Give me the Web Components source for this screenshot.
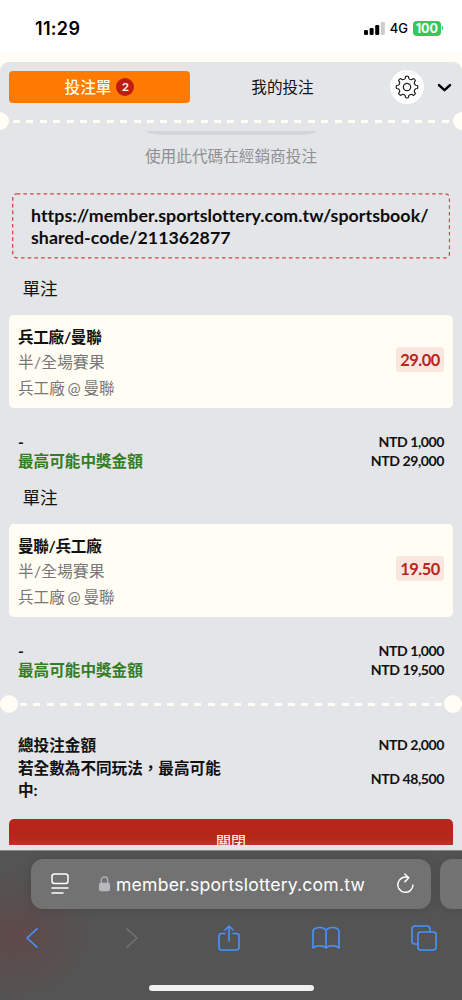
<!DOCTYPE html>
<html lang="zh-Hant">
<head>
<meta charset="utf-8">
<title>投注單</title>
<style>
    body {
        margin: 0;
        width: 462px;
        height: 1000px;
        overflow: hidden;
        background: #fffdf4;
        font-family: Lato, "Noto Sans CJK TC", sans-serif;
        color: #111;
    }
</style>
</head>
<body>
<bet-app></bet-app>

<script>
class StatusBar extends HTMLElement {
    constructor() {
        super();
        this.attachShadow({ mode: 'open' });
    }

    connectedCallback() {
        this.shadowRoot.innerHTML = `
            <style>
                :host {
                    display: flex;
                    align-items: center;
                    box-sizing: border-box;
                    height: 53px;
                    padding: 3px 19px 0 35px;
                    background: #fff;
                    font-family: Inter, sans-serif;
                    color: #000;
                }
                .time { font-size: 18px; font-weight: 600; letter-spacing: 0.3px; margin-right: auto; }
                .net { font-size: 13px; font-weight: 500; margin: 0 5px 0 5px; }
                .battery {
                    width: 27.5px;
                    height: 15px;
                    border-radius: 4px;
                    background: #34c759;
                    color: #fff;
                    font-size: 12.5px;
                    line-height: 15px;
                    font-weight: 700;
                    text-align: center;
                }
                .cap { width: 1.5px; height: 4px; margin-left: 1px; border-radius: 0 2px 2px 0; background: #34c759; }
            </style>
            <span class="time">${this.getAttribute('time')}</span>
            <svg width="21" height="13" viewBox="0 0 21 13">
                <rect x="0" y="8" width="4" height="5" rx="1.2"/>
                <rect x="5.6" y="6" width="4" height="7" rx="1.2"/>
                <rect x="11.2" y="3" width="4" height="10" rx="1.2"/>
                <rect x="16.8" y="0" width="4" height="13" rx="1.2" fill="#ccc"/>
            </svg>
            <span class="net">4G</span>
            <span class="battery">100</span>
            <span class="cap"></span>
        `;
    }
}

class TabBar extends HTMLElement {
    constructor() {
        super();
        this.attachShadow({ mode: 'open' });
    }

    connectedCallback() {
        this.shadowRoot.innerHTML = `
            <style>
                :host {
                    display: flex;
                    align-items: center;
                    height: 50px;
                    padding: 0 9px;
                    font-size: 15.6px;
                }
                .tab { display: flex; align-items: center; justify-content: center; height: 32px; width: 181px; border-radius: 4px; }
                .active { background: #ff7a00; color: #fffdf4; font-weight: 500; }
                .other { width: 185px; }
                ::slotted(span) { padding-bottom: 2px; }
                .count {
                    width: 18px;
                    height: 18px;
                    margin-left: 5px;
                    border-radius: 50%;
                    background: #c01d12;
                    font-size: 12px;
                    line-height: 18px;
                    font-weight: 700;
                    text-align: center;
                }
                .gear { display: flex; width: 34px; height: 34px; border-radius: 50%; background: #fff; margin-left: 15px; }
                .gear svg { margin: auto; }
                .chevron { margin: 2px 0 0 13px; }
            </style>
            <div class="tab active"><slot name="active"></slot><span class="count">${this.getAttribute('count')}</span></div>
            <div class="tab other"><slot name="other"></slot></div>
            <span class="gear">
                <svg width="24" height="24" viewBox="-12 -12 24 24" fill="none" stroke="#222" stroke-width="1.2" stroke-linejoin="round">
                    <path d="${this.gearPath()}"/>
                    <circle r="3.7"/>
                </svg>
            </span>
            <svg class="chevron" width="15" height="10" viewBox="0 0 15 10" fill="none" stroke="#000" stroke-width="2.5" stroke-linecap="round" stroke-linejoin="round">
                <path d="M2 2.2L7.5 7.2L13 2.2"/>
            </svg>
        `;
    }

    // eight blunt teeth with shallow valleys
    gearPath() {
        const at = (r, deg) => {
            const a = deg * Math.PI / 180;
            return (r * Math.sin(a)).toFixed(2) + ' ' + (-r * Math.cos(a)).toFixed(2);
        };
        let d = 'M' + at(10.6, -8);
        for (let i = 0; i < 8; i++) {
            const c = i * 45;
            d += `Q${at(11.2, c)} ${at(10.6, c + 8)}L${at(9, c + 11)}Q${at(7.4, c + 22.5)} ${at(9, c + 34)}L${at(10.6, c + 37)}`;
        }
        return d + 'Z';
    }
}

class TicketDivider extends HTMLElement {
    constructor() {
        super();
        this.attachShadow({ mode: 'open' });
        this.shadowRoot.innerHTML = `
            <style>
                :host { display: flex; align-items: center; height: 18px; color: #fffdf4; }
                :host([edge]) { margin: 0 -9px; }
                i { flex: none; width: 18px; height: 18px; border-radius: 50%; background: currentColor; }
                .line {
                    flex: 1;
                    height: 3px;
                    margin: 1px 2px 0 2px;
                    background: repeating-linear-gradient(90deg, currentColor 0 7px, transparent 7px 13.4px);
                }
                :host([edge]) .line { margin-left: 4px; margin-right: 4px; }
            </style>
            <i></i><span class="line"></span><i></i>
        `;
    }
}

class ShareCode extends HTMLElement {
    constructor() {
        super();
        this.attachShadow({ mode: 'open' });
        this.shadowRoot.innerHTML = `
            <style>
                :host { display: block; }
                .grip { height: 4px; margin: 0 146px; background: #d3d5dc; border-radius: 0 0 18px 18px / 0 0 4px 4px; }
                .hint { margin: 9px 0 25px; height: 24px; line-height: 24px; font-size: 15.65px; color: #8e9092; text-align: center; }
                .box { display: flex; margin: 0 12px; height: 65px; position: relative; }
                svg { position: absolute; left: 0; top: 0; }
                .url {
                    margin: 11px 0 0 19px;
                    font-size: 17.8px;
                    line-height: 22.3px;
                    letter-spacing: 0.04px;
                    font-weight: 700;
                    font-variant-ligatures: none;
                    white-space: pre;
                    color: #0c0c0c;
                }
            </style>
            <div class="grip"></div>
            <div class="hint"><slot name="hint"></slot></div>
            <div class="box">
                <svg width="438" height="66" fill="none" stroke="#d6414b" stroke-width="1.3" stroke-dasharray="3.6 3.1">
                    <rect x="0.7" y="0.9" width="436.8" height="63.9" rx="4"/>
                </svg>
                <div class="url"><slot></slot></div>
            </div>
        `;
    }
}

class BetItem extends HTMLElement {
    constructor() {
        super();
        this.attachShadow({ mode: 'open' });
    }

    connectedCallback() {
        const get = (name) => this.getAttribute(name);
        this.shadowRoot.innerHTML = `
            <style>
                :host { display: block; height: 209.3px; }
                h3 { margin: 0 0 14px 22.5px; height: 26px; line-height: 28px; font-size: 17.6px; font-weight: 400; }
                .card {
                    display: flex;
                    align-items: center;
                    justify-content: space-between;
                    box-sizing: border-box;
                    height: 93px;
                    margin: 0 9px 24px;
                    padding: 2px 9px 0;
                    border-radius: 5px;
                    background: #fffdf4;
                    font-size: 15.6px;
                    line-height: 26px;
                    color: #777;
                }
                .name { font-weight: 700; line-height: 24px; letter-spacing: -0.3px; color: #111; }
                .market { letter-spacing: 0.3px; }
                .pick { word-spacing: -1.2px; }
                .odds {
                    box-sizing: border-box;
                    width: 48px;
                    height: 25px;
                    margin-top: -6px;
                    border-radius: 4px;
                    background: #f8e6df;
                    color: #b8281c;
                    font-size: 16.4px;
                    letter-spacing: -0.5px;
                    font-weight: 700;
                    line-height: 25px;
                    text-align: center;
                }
            </style>
            <h3>單注</h3>
            <div class="card">
                <div>
                    <div class="name">${get('name')}</div>
                    <div class="market">${get('market')}</div>
                    <div class="pick">${get('pick')}</div>
                </div>
                <div class="odds">${get('odds')}</div>
            </div>
            <amount-row amount="${get('stake')}">-</amount-row>
            <amount-row amount="${get('win')}" win>最高可能中獎金額</amount-row>
        `;
    }
}

class AmountRow extends HTMLElement {
    constructor() {
        super();
        this.attachShadow({ mode: 'open' });
    }

    connectedCallback() {
        this.shadowRoot.innerHTML = `
            <style>
                :host {
                    display: flex;
                    justify-content: space-between;
                    align-items: center;
                    height: 18.5px;
                    padding: 0 18px;
                    font-weight: 700;
                    color: #111;
                }
                :host([total]) { height: 23px; }
                :host([tall]) { height: 45px; }
                .label { max-width: 210px; padding-top: 2px; font-size: 15.6px; line-height: 22.5px; }
                :host([total]) .label { padding-top: 1px; }
                :host([win]) .label { color: #337d22; }
                .amount { padding-top: 0.6px; font-size: 14.1px; letter-spacing: -0.45px; }
            </style>
            <span class="label"><slot></slot></span>
            <span class="amount">NTD ${this.getAttribute('amount')}</span>
        `;
    }
}

class BrowserBar extends HTMLElement {
    constructor() {
        super();
        this.attachShadow({ mode: 'open' });
    }

    connectedCallback() {
        this.shadowRoot.innerHTML = `
            <style>
                :host {
                    display: block;
                    box-sizing: border-box;
                    height: 150px;
                    overflow: hidden;
                    border-top: 1px solid #858585;
                    background: radial-gradient(ellipse 80px 66px at 14px 85px, #5f4949 0, #5f494999 45%, #54545400 100%), #545454;
                    font-family: Inter, sans-serif;
                }
                .address {
                    display: grid;
                    grid-template-columns: 400px 40px;
                    gap: 9px;
                    margin: 8px 0 0 31px;
                }
                .field {
                    display: flex;
                    align-items: center;
                    box-sizing: border-box;
                    height: 50px;
                    border-radius: 12px;
                    background: #727272;
                    box-shadow: 0 0 12px #0002;
                    color: #fff;
                    font-size: 17.6px;
                    letter-spacing: 0.2px;
                }
                .page { margin: 0 0 1px 20px; }
                .lock { margin-left: 30px; }
                .host { margin-left: 6px; }
                .reload { margin-left: auto; margin-right: 16px; margin-bottom: 2px; }
                .tools {
                    display: grid;
                    grid-template-columns: 64px 136px 57px 138px 57px;
                    height: 58px;
                    align-items: center;
                    justify-items: center;
                    color: #4793ff;
                    fill: none;
                    stroke: currentColor;
                    stroke-width: 1.6;
                    stroke-linecap: round;
                    stroke-linejoin: round;
                }
                .dim { color: #717171; }
                .home { width: 165px; height: 6px; margin: 18px auto 0; border-radius: 3px; background: #f0f0f0; }
            </style>
            <div class="address">
                <div class="field">
                    <svg class="page" width="18" height="21" viewBox="0 0 18 21" fill="none" stroke="#fff" stroke-width="1.5" stroke-linecap="round">
                        <rect x="1" y="1" width="16" height="9.5" rx="2.5"/>
                        <path d="M1 15H17M1 20H12"/>
                    </svg>
                    <svg class="lock" width="11" height="16" viewBox="0 0 11 16">
                        <rect x="0" y="6.8" width="11" height="8.4" rx="1.8" fill="#b9b7bd"/>
                        <path d="M2.3 7.5V4.4a3.2 3.5 0 0 1 6.4 0V7.5" fill="none" stroke="#b9b7bd" stroke-width="1.3"/>
                    </svg>
                    <span class="host">${this.getAttribute('host')}</span>
                    <svg class="reload" width="19" height="21" viewBox="0 0 19 21" fill="none" stroke="#fff" stroke-width="1.5" stroke-linecap="round" stroke-linejoin="round">
                        <path d="M17 12A7.6 7.6 0 1 1 12 4.6M8.8 1L12.8 4.8L9 8.6"/>
                    </svg>
                </div>
                <div class="field"></div>
            </div>
            <div class="tools">
                <svg width="12" height="20" viewBox="0 0 12 20"><path d="M11 0.8L1 10L11 19.2"/></svg>
                <svg class="dim" width="12" height="20" viewBox="0 0 12 20"><path d="M1 0.8L11 10L1 19.2"/></svg>
                <svg width="24" height="28" viewBox="0 0 24 28"><path d="M8 9.5H4.5Q2 9.5 2 12V23.5Q2 26 4.5 26H19.5Q22 26 22 23.5V12Q22 9.5 19.5 9.5H16M12 17V2M8 6L12 2L16 6"/></svg>
                <svg width="28" height="24" viewBox="0 0 28 24"><path d="M14 4.5C12 0.6 3.5 0.4 1 4.5V22C4 19 11 19 14 22C17 19 24 19 27 22V4.5C24.5 0.4 16 0.6 14 4.5V22"/></svg>
                <svg width="26" height="26" viewBox="0 0 26 26"><rect x="7" y="7" width="18" height="18" rx="2.5"/><path d="M7 19H4Q1 19 1 16V4Q1 1 4 1H16Q19 1 19 4V7"/></svg>
            </div>
            <div class="home"></div>
        `;
    }
}

class BetApp extends HTMLElement {
    constructor() {
        super();
        this.attachShadow({ mode: 'open' });
    }

    connectedCallback() {
        this.shadowRoot.innerHTML = `
            <style>
                :host { display: flex; flex-direction: column; height: 1000px; }
                .panel {
                    box-sizing: border-box;
                    height: 788px;
                    margin-top: 9px;
                    overflow: hidden;
                    border-radius: 9px 9px 0 0;
                    background: #e4e5e8;
                }
                .top { height: 19px; }
                .middle { padding-top: 1.4px; }
                .totals { padding: 20px 0 18px; }
                .close {
                    display: block;
                    box-sizing: border-box;
                    height: 26px;
                    margin: 0 9px;
                    padding-top: 11px;
                    overflow: hidden;
                    border-radius: 5px 5px 0 0;
                    background: linear-gradient(#b6261b 70%, #bc3428);
                    color: #fffdf4;
                    font-size: 15px;
                    line-height: 22px;
                    text-align: center;
                }
                share-code { margin-bottom: 17px; }
            </style>
            <status-bar time="11:29"></status-bar>
            <div class="panel">
                <tab-bar count="2"><span slot="active">投注單</span><span slot="other">我的投注</span></tab-bar>
                <div class="top"><ticket-divider edge></ticket-divider></div>
                <share-code><span slot="hint">使用此代碼在經銷商投注</span>https://member.sportslottery.com.tw/sportsbook/<br>shared-code/211362877</share-code>
                <bet-item name="兵工廠/曼聯" market="半/全場賽果" pick="兵工廠 @ 曼聯" odds="29.00" stake="1,000" win="29,000"></bet-item>
                <bet-item name="曼聯/兵工廠" market="半/全場賽果" pick="兵工廠 @ 曼聯" odds="19.50" stake="1,000" win="19,500"></bet-item>
                <div class="middle"><ticket-divider></ticket-divider></div>
                <div class="totals">
                    <amount-row amount="2,000" total>總投注金額</amount-row>
                    <amount-row amount="48,500" tall>若全數為不同玩法，最高可能中:</amount-row>
                </div>
                <div class="close">關閉</div>
            </div>
            <browser-bar host="member.sportslottery.com.tw"></browser-bar>
        `;
    }
}

customElements.define('status-bar', StatusBar);
customElements.define('tab-bar', TabBar);
customElements.define('ticket-divider', TicketDivider);
customElements.define('share-code', ShareCode);
customElements.define('amount-row', AmountRow);
customElements.define('bet-item', BetItem);
customElements.define('browser-bar', BrowserBar);
customElements.define('bet-app', BetApp);
</script>
</body>
</html>
